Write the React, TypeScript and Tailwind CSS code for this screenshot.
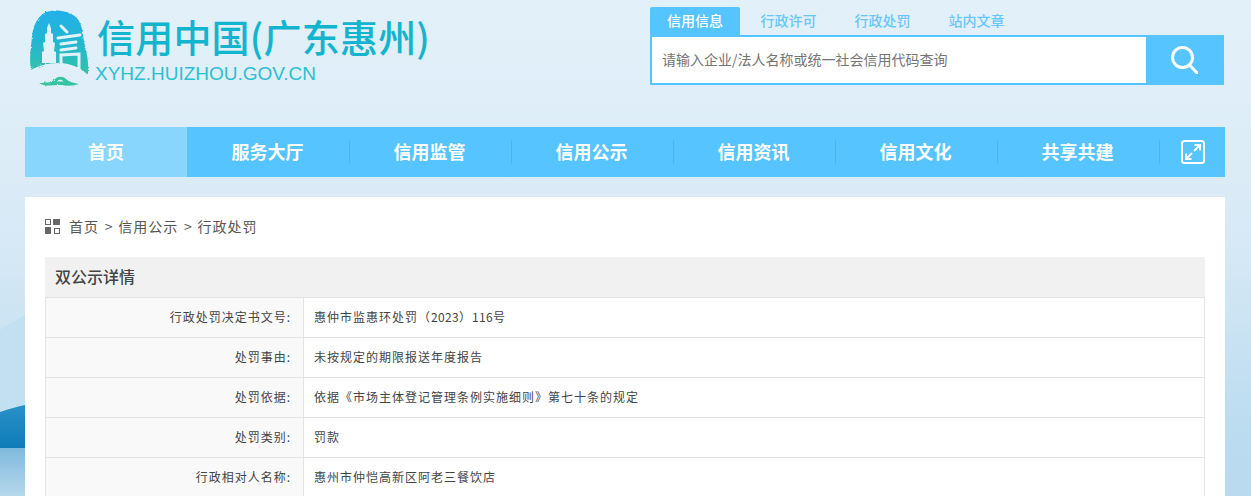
const navItems = ["服务大厅", "信用监管", "信用公示", "信用资讯", "信用文化", "共享共建"];
const searchTabs = ["行政许可", "行政处罚", "站内文章"];

const rows = [
  {
    label: "行政处罚决定书文号:",
    value: (
      <>
        惠仲市监惠环处罚（<span className="tracking-[0.35px]">2023</span>）<span className="tracking-[0.35px]">116</span>号
      </>
    ),
  },
  { label: "处罚事由:", value: "未按规定的期限报送年度报告" },
  { label: "处罚依据:", value: "依据《市场主体登记管理条例实施细则》第七十条的规定" },
  { label: "处罚类别:", value: "罚款" },
  { label: "行政相对人名称:", value: "惠州市仲恺高新区阿老三餐饮店" },
];

function Logo() {
  return (
    <svg width="60" height="80" viewBox="0 0 60 80" className="shrink-0">
      <defs>
        <linearGradient id="logoFill" x1="0" y1="0" x2="0" y2="1">
          <stop offset="0" stopColor="#1fb1ea" />
          <stop offset="0.55" stopColor="#25b7cf" />
          <stop offset="1" stopColor="#33c4a2" />
        </linearGradient>
        <filter id="rough" x="-5%" y="-5%" width="110%" height="110%">
          <feTurbulence type="fractalNoise" baseFrequency="0.35" numOctaves="2" seed="4" />
          <feDisplacementMap in="SourceGraphic" scale="3" />
        </filter>
      </defs>
      <path
        d="M16 3 C24 0 38 1 46 8 C52 14 53 24 54 33 C57 44 59 54 58 66 C52 60 42 54 28 54 C18 54 8 57 1 61 C-1 50 1 38 2 28 C3 16 8 7 16 3 Z"
        fill="url(#logoFill)"
        filter="url(#rough)"
      />
      <path d="M12 54 L12 43 L14 42 L13 34 L15 33 L15 25 L17 24 L17 19 L19 14 L21 19 L21 24 L23 25 L23 33 L25 34 L24 42 L26 43 L26 54 Z" fill="#e3f2f8" />
      <g stroke="#e3f2f8" strokeWidth="3" fill="none" strokeLinecap="round">
        <path d="M31 17 L37 23" />
        <path d="M28 29 L50 26" />
        <path d="M31 35 L46 33" />
        <path d="M31 41 L46 39" />
        <path d="M31 46 L31 57 L49 60 L49 45 Z" />
      </g>
      <path
        d="M9 74 C17 74 22 73 25 70 C28 67 33 67 36 70 C39 73 44 74 49 75 C40 78 34 76 29 76 C22 76 15 78 9 74 Z"
        fill="#35c3a0"
        filter="url(#rough)"
      />
      <path d="M27 72.5 C28.5 70 32 70 33.5 72.5 Z" fill="#e3f2f8" />
    </svg>
  );
}

function GridIcon() {
  return (
    <svg width="15" height="15" viewBox="0 0 15 15" className="shrink-0">
      <rect x="0.5" y="0.5" width="5" height="5" fill="none" stroke="#666" />
      <rect x="8" y="0" width="7" height="6" fill="#666" />
      <rect x="0" y="8" width="6" height="7" fill="#666" />
      <rect x="9.5" y="9.5" width="5" height="5" fill="none" stroke="#666" />
    </svg>
  );
}

function ExpandIcon() {
  return (
    <svg width="24" height="24" viewBox="0 0 24 24" fill="none" stroke="white" strokeWidth="2">
      <rect x="1" y="1" width="22" height="22" rx="2.5" />
      <path d="M13 11 L19 5 M13.5 5 H19 V10.5" />
      <path d="M11 13 L5 19 M5 13.5 V19 H10.5" />
    </svg>
  );
}

function SearchIcon() {
  return (
    <svg width="27" height="28" viewBox="0 0 27 28" fill="none" stroke="white" strokeWidth="3">
      <circle cx="11.5" cy="11.5" r="10" />
      <path d="M18.5 19 L26 27" strokeLinecap="round" />
    </svg>
  );
}

export default function App() {
  return (
    <div className="relative h-[496px] overflow-hidden bg-[linear-gradient(180deg,#e2f0f9_0%,#dcecf7_35%,#d3e7f5_55%,#bcdcf0_85%,#b9daef_100%)] font-['Noto_Sans_CJK_SC','Liberation_Sans',sans-serif]">
      {/* hills behind the left edge */}
      <svg className="absolute bottom-0 left-0" width="25" height="190" viewBox="0 0 25 190">
        <defs>
          <linearGradient id="hill" x1="0" y1="0" x2="0" y2="1">
            <stop offset="0" stopColor="#2a90c8" />
            <stop offset="1" stopColor="#0f7cb8" />
          </linearGradient>
          <linearGradient id="water" x1="0" y1="0" x2="0" y2="1">
            <stop offset="0" stopColor="#7fb9dc" />
            <stop offset="1" stopColor="#b5d8ec" />
          </linearGradient>
        </defs>
        <path d="M0 24 L25 9 V190 H0 Z" fill="#c2e0f2" />
        <path d="M0 106 C8 103 16 101 25 99 V142 H0 Z" fill="url(#hill)" />
        <path d="M0 142 H25 V190 H0 Z" fill="url(#water)" />
      </svg>

      <div className="relative ml-[25px] flex w-[1200px] flex-col">
        <header className="flex h-[127px] items-start justify-between">
          <div className="mt-[9px] ml-[5px] flex items-start gap-[6px]">
            <Logo />
            <div className="mt-[4px] ml-[1px] flex flex-col">
              <span className="text-[38px] leading-[46px] font-medium tracking-[0.2px] whitespace-nowrap text-[#13b4cd]">信用中国(广东惠州)</span>
              <span className="mt-[3px] ml-[-2px] font-['Liberation_Sans',sans-serif] text-[19px] leading-[24px] text-[#2bbfd3]">XYHZ.HUIZHOU.GOV.CN</span>
            </div>
          </div>

          <div className="mt-[7px] mr-px w-[574px]">
            <div className="flex h-[28px] items-stretch text-[14px] font-medium">
              <div className="flex w-[90px] items-center justify-center rounded-t-[2px] bg-[#55c4ff] pb-[2px] text-white">信用信息</div>
              {searchTabs.map((tab) => (
                <div key={tab} className="flex w-[94px] items-center justify-center pb-[2px] pl-[3px] text-[#69c7f8] first:ml-[-1px]">
                  {tab}
                </div>
              ))}
            </div>
            <div className="flex h-[50px] border-2 border-[#55c4ff] bg-white">
              <div className="flex flex-1 items-center pb-[2px] pl-[10px] text-[14px] text-[#757575]">请输入企业/法人名称或统一社会信用代码查询</div>
              <div className="flex w-[76px] items-center justify-center bg-[#55c4ff]">
                <SearchIcon />
              </div>
            </div>
          </div>
        </header>

        <nav className="flex h-[50px] bg-[#55c4ff] text-[18px] font-bold text-white">
          <div className="mr-px flex w-[162px] items-center justify-center bg-[#88d6fe] pb-[2px]">首页</div>
          {navItems.map((item) => (
            <div key={item} className="flex w-[162px] items-center justify-center">
              <span className="flex h-[24px] w-full items-center justify-center border-r border-[#48b5ec] pr-[2px] pb-[2px]">{item}</span>
            </div>
          ))}
          <div className="flex flex-1 items-center pl-[21px]">
            <ExpandIcon />
          </div>
        </nav>

        <main className="mt-[20px] bg-white px-[20px]">
          <div className="flex h-[60px] items-center gap-[9px] pb-[2px] text-[14px] tracking-[1px] text-[#555]">
            <GridIcon />
            <div className="flex gap-[5px]">
              <span>首页</span>
              <span className="px-[0.75px] tracking-normal">&gt;</span>
              <span>信用公示</span>
              <span className="px-[0.75px] tracking-normal">&gt;</span>
              <span>行政处罚</span>
            </div>
          </div>

          <h2 className="flex h-[40px] items-center bg-[#f1f1f1] pb-[2px] pl-[10px] text-[16px] font-medium text-[#444]">双公示详情</h2>

          <div className="border-r border-l border-[#e5e5e5] text-[12px] text-[#444]">
            {rows.map((row) => (
              <div key={row.label} className="flex h-[40px] border-t border-[#e5e5e5]">
                <div className="flex w-[258px] items-center justify-end border-r border-[#e5e5e5] bg-[#f9f9f9] pr-[12px] pb-[2px] tracking-[1px]">{row.label}</div>
                <div className="flex flex-1 items-center pb-[2px] pl-[10px] tracking-[1px]">{row.value}</div>
              </div>
            ))}
          </div>
        </main>
      </div>
    </div>
  );
}
